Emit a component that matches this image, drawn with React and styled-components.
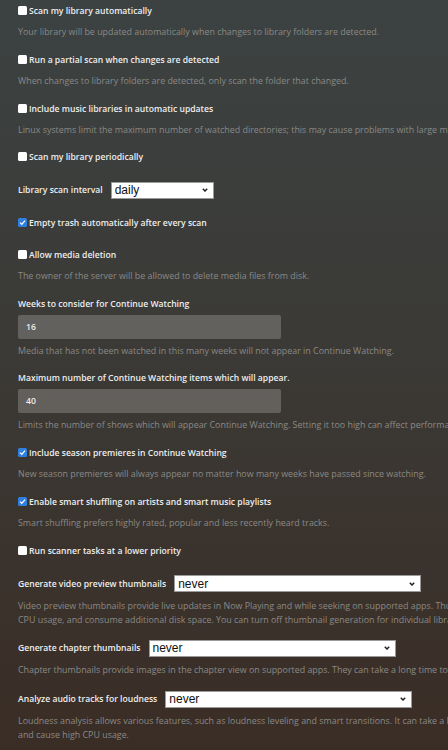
import React from 'react';
import styled, { createGlobalStyle } from 'styled-components';

const colors = {
  top: '#3c4242',
  middle: '#3b3935',
  bottom: '#3a2d25',
  label: '#eeeeee',
  help: '#8a8986',
  field: 'rgba(255, 255, 255, 0.2)',
  check: '#2f7fe0',
};

const GlobalStyle = createGlobalStyle`
  html, body {
    margin: 0;
    padding: 0;
    overflow: hidden;
  }

  body {
    font-family: "Open Sans", "DejaVu Sans", sans-serif;
  }
`;

const Page = styled.div`
  background: linear-gradient(180deg, ${colors.top} 0%, ${colors.middle} 50%, ${colors.bottom} 100%);
  height: 750px;
  overflow: hidden;
  width: 448px;
`;

const Content = styled.div`
  box-sizing: border-box;
  padding: 0 0 0 18px;
  width: 668px;
`;

const Group = styled.div`
  margin-bottom: 9.8px;
`;

const Row = styled.label`
  align-items: center;
  display: flex;
  gap: ${props => (props.$select ? '8px' : '2px')};
  min-height: ${props => (props.$select ? '24px' : '22px')};
`;

const Label = styled.span`
  color: ${colors.label};
  font-size: 8.6px;
  font-weight: 600;
  line-height: 14px;
  white-space: nowrap;
`;

const FieldLabel = styled(Label)`
  display: block;
  line-height: 22px;
`;

const Help = styled.div`
  color: ${colors.help};
  font-size: 8.9px;
  line-height: 14px;
  margin-top: ${props => (props.$field ? '5px' : '3px')};
`;

const Box = styled.span`
  align-items: center;
  background: ${props => (props.$checked ? colors.check : '#ffffff')};
  border-radius: 1.5px;
  display: inline-flex;
  flex: none;
  height: 9px;
  justify-content: center;
  margin-top: -1px;
  width: 9px;
`;

const Select = styled.div`
  align-items: center;
  background: #ffffff;
  border: 1px solid #9a9a9a;
  box-sizing: border-box;
  color: #111111;
  display: flex;
  font-family: "Liberation Sans", Arial, sans-serif;
  font-size: 12px;
  height: 17px;
  justify-content: space-between;
  padding: 0 5px 0 3px;
  width: ${props => props.$width}px;
`;

const TextField = styled.div`
  align-items: center;
  background: ${colors.field};
  border-radius: 2px;
  box-sizing: border-box;
  color: ${colors.label};
  display: flex;
  font-size: 8.6px;
  font-weight: 600;
  height: 24px;
  padding-left: 8px;
  width: 263px;
`;

const Checkbox = ({ checked }) => (
  <Box $checked={checked}>
    {checked && (
      <svg width="7" height="7" viewBox="0 0 10 10">
        <path d="M1.5 5.2 L4 7.6 L8.6 2.2" fill="none" stroke="#fff" strokeWidth="1.8" />
      </svg>
    )}
  </Box>
);

const Chevron = () => (
  <svg width="6" height="4" viewBox="0 0 6 4">
    <path d="M0.8 0.8 L3 3 L5.2 0.8" fill="none" stroke="#222" strokeWidth="1.5" />
  </svg>
);

const CheckSetting = ({ label, checked, help }) => (
  <Group>
    <Row>
      <Checkbox checked={checked} />
      <Label>{label}</Label>
    </Row>
    {help && <Help>{help}</Help>}
  </Group>
);

const SelectSetting = ({ label, value, width = 247, help }) => (
  <Group>
    <Row $select>
      <Label>{label}</Label>
      <Select $width={width}>
        <span>{value}</span>
        <Chevron />
      </Select>
    </Row>
    {help && <Help>{help}</Help>}
  </Group>
);

const TextSetting = ({ label, value, help }) => (
  <Group>
    <FieldLabel>{label}</FieldLabel>
    <TextField>{value}</TextField>
    {help && <Help $field>{help}</Help>}
  </Group>
);

const App = () => (
  <Page>
    <GlobalStyle />
    <Content>
      <CheckSetting
        label="Scan my library automatically"
        help="Your library will be updated automatically when changes to library folders are detected."
      />
      <CheckSetting
        label="Run a partial scan when changes are detected"
        help="When changes to library folders are detected, only scan the folder that changed."
      />
      <CheckSetting
        label="Include music libraries in automatic updates"
        help="Linux systems limit the maximum number of watched directories; this may cause problems with large music libraries."
      />
      <CheckSetting label="Scan my library periodically" />
      <SelectSetting label="Library scan interval" value="daily" width={103} />
      <CheckSetting label="Empty trash automatically after every scan" checked />
      <CheckSetting
        label="Allow media deletion"
        help="The owner of the server will be allowed to delete media files from disk."
      />
      <TextSetting
        label="Weeks to consider for Continue Watching"
        value="16"
        help="Media that has not been watched in this many weeks will not appear in Continue Watching."
      />
      <TextSetting
        label="Maximum number of Continue Watching items which will appear."
        value="40"
        help="Limits the number of shows which will appear Continue Watching. Setting it too high can affect performance."
      />
      <CheckSetting
        label="Include season premieres in Continue Watching"
        checked
        help="New season premieres will always appear no matter how many weeks have passed since watching."
      />
      <CheckSetting
        label="Enable smart shuffling on artists and smart music playlists"
        checked
        help="Smart shuffling prefers highly rated, popular and less recently heard tracks."
      />
      <CheckSetting label="Run scanner tasks at a lower priority" />
      <SelectSetting
        label="Generate video preview thumbnails"
        value="never"
        help="Video preview thumbnails provide live updates in Now Playing and while seeking on supported apps. Thumbnail generation may take a long time, cause high CPU usage, and consume additional disk space. You can turn off thumbnail generation for individual libraries in the library's advanced settings."
      />
      <SelectSetting
        label="Generate chapter thumbnails"
        value="never"
        help="Chapter thumbnails provide images in the chapter view on supported apps. They can take a long time to generate and consume additional disk space."
      />
      <SelectSetting
        label="Analyze audio tracks for loudness"
        value="never"
        help="Loudness analysis allows various features, such as loudness leveling and smart transitions. It can take a long time to complete when analyzing many tracks and cause high CPU usage."
      />
    </Content>
  </Page>
);

export default App;
